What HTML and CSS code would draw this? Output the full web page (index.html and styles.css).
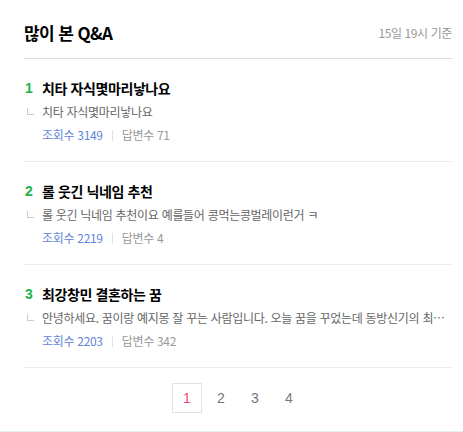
FILE: index.html
```html
<!DOCTYPE html>
<html lang="ko">
<head>
    <meta charset="UTF-8">
    <meta name="viewport" content="width=device-width, initial-scale=1.0">
    <title>많이 본 Q&amp;A</title>
    <link rel="stylesheet" href="styles.css">
</head>
<body>
    <section class="qna">
        <div class="qna-header">
            <h2>많이 본 Q&amp;A</h2>
            <span class="qna-date">15일 19시 기준</span>
        </div>

        <ul class="qna-list">
            <li class="qna-item">
                <div class="qna-title"><span class="rank">1</span>치타 자식몇마리낳나요</div>
                <p class="qna-snippet">치타 자식몇마리낳나요</p>
                <div class="qna-meta">
                    <a href="#">조회수 3149</a>
                    <span class="bar"></span>
                    <span>답변수 71</span>
                </div>
            </li>
            <li class="qna-item">
                <div class="qna-title"><span class="rank">2</span>롤 웃긴 닉네임 추천</div>
                <p class="qna-snippet">롤 웃긴 닉네임 추천이요 예를들어 콩먹는콩벌레이런거 ㅋ</p>
                <div class="qna-meta">
                    <a href="#">조회수 2219</a>
                    <span class="bar"></span>
                    <span>답변수 4</span>
                </div>
            </li>
            <li class="qna-item">
                <div class="qna-title"><span class="rank">3</span>최강창민 결혼하는 꿈</div>
                <p class="qna-snippet">안녕하세요. 꿈이랑 예지몽 잘 꾸는 사람입니다. 오늘 꿈을 꾸었는데 동방신기의 최…</p>
                <div class="qna-meta">
                    <a href="#">조회수 2203</a>
                    <span class="bar"></span>
                    <span>답변수 342</span>
                </div>
            </li>
        </ul>

        <div class="pager">
            <a href="#" class="on">1</a>
            <a href="#">2</a>
            <a href="#">3</a>
            <a href="#">4</a>
        </div>
    </section>
    <div class="next-section"></div>
</body>
</html>
```

FILE: styles.css
```css
body {
    margin: 0;
    background-color: #fff;
    color: #000;
    font-family: "Noto Sans CJK KR", "Noto Sans", sans-serif;
}

.qna {
    padding: 0 11px 18px 24px;
}

/* Header */
.qna-header {
    display: flex;
    align-items: center;
    justify-content: space-between;
    height: 59px;
    box-sizing: border-box;
    padding-top: 7px;
    border-bottom: 1px solid #dcdcdc;
}

.qna-header h2 {
    margin: 0;
    font-size: 17px;
    font-weight: 700;
    letter-spacing: -0.6px;
    line-height: 20px;
}

.qna-date {
    font-size: 12px;
    color: #999;
    letter-spacing: -0.4px;
    line-height: 20px;
}

/* List */
.qna-list {
    list-style: none;
    margin: 0;
    padding: 0;
}

.qna-item {
    padding: 19px 0 16px;
    border-bottom: 1px solid #ececec;
}

.qna-title {
    position: relative;
    padding-left: 18px;
    font-size: 14px;
    font-weight: 700;
    line-height: 20px;
    letter-spacing: -0.4px;
}

.rank {
    position: absolute;
    left: 1px;
    top: 0;
    color: #20b34a;
    font-family: "Liberation Sans", sans-serif;
    font-size: 14px;
    font-weight: 700;
}

.qna-snippet {
    position: relative;
    margin: 4px 0 0;
    padding-left: 18px;
    font-size: 12px;
    line-height: 20px;
    color: #666;
    letter-spacing: -0.3px;
    white-space: nowrap;
}

.qna-snippet::before {
    content: "";
    position: absolute;
    left: 3px;
    top: 6px;
    width: 6px;
    height: 6px;
    border-left: 1px solid #ccc;
    border-bottom: 1px solid #ccc;
}

.qna-meta {
    display: flex;
    align-items: center;
    margin-top: 3px;
    padding-left: 18px;
    font-size: 12px;
    line-height: 20px;
    color: #999;
    letter-spacing: -0.3px;
}

.qna-meta a {
    color: #5f84d9;
    text-decoration: none;
}

.qna-meta .bar {
    width: 1px;
    height: 11px;
    margin: 0 9px;
    background-color: #e2e2e2;
}

/* Pagination */
.pager {
    display: flex;
    justify-content: center;
    gap: 4px;
    padding-top: 15px;
}

.pager a {
    display: flex;
    align-items: center;
    justify-content: center;
    width: 30px;
    height: 30px;
    box-sizing: border-box;
    font-family: "Liberation Sans", sans-serif;
    font-size: 14px;
    color: #777;
    text-decoration: none;
}

.pager a.on {
    border: 1px solid #e2e2e2;
    color: #f4476b;
}

.next-section {
    height: 20px;
    border-top: 1px solid #e3f0f6;
    background-color: #fbfdfe;
}
```
